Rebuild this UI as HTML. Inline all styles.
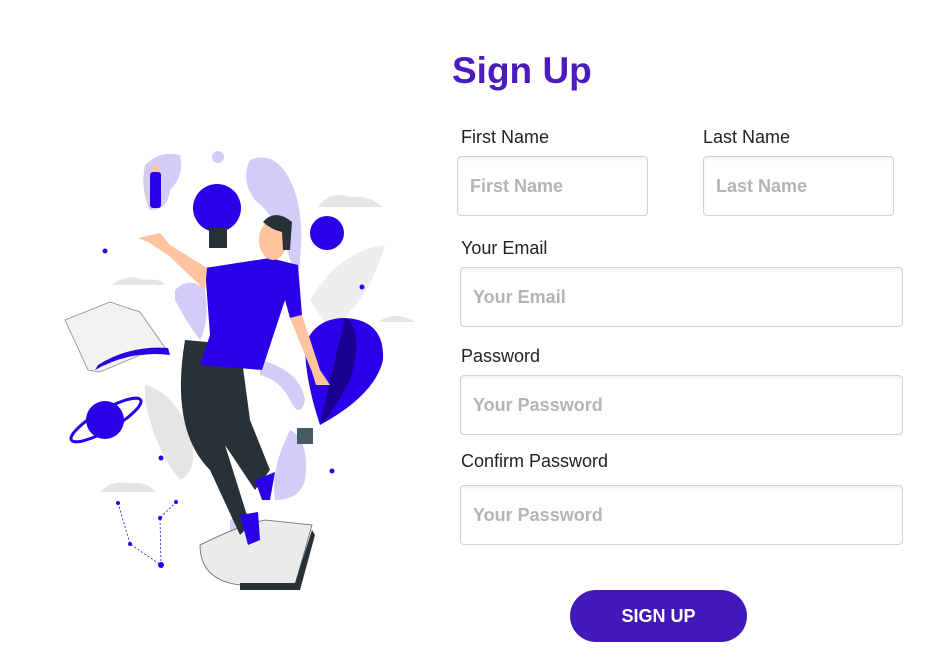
<!DOCTYPE html>
<html><head><meta charset="utf-8"><style>
*{margin:0;padding:0;box-sizing:border-box}
body{width:947px;height:667px;background:#fff;position:relative;overflow:hidden;font-family:"Liberation Sans",Arial,sans-serif}
.t{position:absolute;left:452px;top:50px;font-size:37px;font-weight:bold;color:#4a1bbf}
.l{position:absolute;font-size:18px;color:#222}
.i{position:absolute;border:1.5px solid #d2d2d2;border-radius:4px;background:#fff;box-shadow:inset 0 2px 3px rgba(0,0,0,.06);font-size:18px;font-weight:bold;color:#b4b4b4;padding-left:12px;display:flex;align-items:center}
.b{position:absolute;left:570px;top:590px;width:177px;height:52px;border-radius:26px;background:#4318b8;color:#fff;font-weight:bold;font-size:18px;display:flex;align-items:center;justify-content:center}
</style></head><body>
<svg width="440" height="620" style="position:absolute;left:0;top:0" viewBox="0 0 440 620">
<g fill="#d3ccf7">
<path d="M145 165 Q160 150 180 155 Q185 175 170 190 Q168 210 150 210 Q140 190 145 165Z"/>
<circle cx="218" cy="157" r="6"/>
<path d="M250 160 Q275 150 290 180 Q305 210 300 260 Q300 280 290 260 Q280 220 255 200 Q240 180 250 160Z"/>
<path d="M175 290 Q190 275 205 290 Q210 320 200 340 Q185 320 175 300Z"/>
<path d="M260 360 Q300 370 305 400 Q300 420 290 400 Q280 380 260 375Z"/>
<path d="M290 430 Q310 440 305 480 Q300 500 275 500 Q270 470 290 430Z"/>
<path d="M230 520 Q250 510 260 530 Q245 545 230 540Z"/>
</g>
<g fill="#e5e5e5">
<path d="M318 207 Q330 190 350 197 Q370 195 382 207Z"/>
<path d="M112 285 Q125 273 145 280 Q160 278 165 285Z"/>
<path d="M101 492 Q110 480 130 483 Q150 482 155 492Z"/>
<path d="M378 322 Q395 310 415 322Z"/>
<path d="M145 385 Q170 390 190 430 Q200 470 180 480 Q155 450 145 400Z"/>
<path d="M310 300 Q340 250 385 245 Q370 300 330 330Z" fill="#eeeeee"/>
</g>
<rect x="150" y="172" width="11" height="36" rx="3" fill="#2a00e8"/>
<path d="M150 172 L155.5 163 L161 172Z" fill="#f9c4a0"/>
<circle cx="217" cy="208" r="24" fill="#2a00e8"/>
<rect x="209" y="228" width="18" height="20" fill="#263238"/>
<circle cx="327" cy="233" r="17" fill="#2a00e8"/>
<path d="M65 320 L110 302 L140 312 L168 352 L140 355 L100 372 L88 370 Z" fill="#f2f2f2" stroke="#888" stroke-width=".8"/>
<path d="M95 370 Q130 350 170 355 L168 348 Q130 345 98 365Z" fill="#2a00e8"/>
<circle cx="105" cy="420" r="19" fill="#2a00e8"/>
<ellipse cx="106" cy="420" rx="40" ry="10" transform="rotate(-30 106 420)" fill="none" stroke="#2a00e8" stroke-width="3"/>
<path d="M345 318 Q385 320 383 360 Q375 395 320 425 Q305 380 305 345 Q315 318 345 318Z" fill="#2a00e8"/>
<path d="M345 318 Q365 330 350 380 Q335 410 320 425 Q330 380 345 318Z" fill="#1a0090"/>
<rect x="297" y="428" width="16" height="16" fill="#455a64"/>
<path d="M200 545 Q240 525 265 520 L312 525 L295 585 L240 585 Q200 580 200 545Z" fill="#ebebeb" stroke="#666" stroke-width=".8"/>
<path d="M240 583 L295 583 L312 530 L315 535 L300 590 L240 590Z" fill="#263238"/>
<path d="M185 340 L240 345 L250 420 L270 470 L255 490 L225 445 L250 525 L240 535 L210 470 Q170 430 185 340Z" fill="#263238"/>
<path d="M255 480 L275 472 L270 500 L262 500Z" fill="#2a00e8"/>
<path d="M240 515 L258 512 L260 540 L248 545Z" fill="#2a00e8"/>
<path d="M205 268 L270 258 L298 265 L302 315 L290 318 L285 300 L262 370 L200 365 L210 335 Z" fill="#2a00e8"/>
<path d="M207 268 L170 245 L160 233 L138 238 L148 242 L168 255 L205 290Z" fill="#ffc3a0"/>
<path d="M290 318 L302 315 L320 370 L330 385 L316 385 L312 372Z" fill="#ffc3a0"/>
<ellipse cx="273" cy="240" rx="14" ry="20" fill="#ffc3a0"/>
<path d="M263 222 Q275 208 292 222 L290 250 L283 250 L282 232 Q272 230 263 222Z" fill="#263238"/>
<g fill="#2a00e8"><circle cx="105" cy="251" r="2.5"/><circle cx="362" cy="287" r="2.5"/><circle cx="161" cy="458" r="2.5"/><circle cx="332" cy="471" r="2.5"/><circle cx="118" cy="503" r="2"/><circle cx="176" cy="502" r="2"/><circle cx="130" cy="544" r="2"/><circle cx="161" cy="565" r="3"/><circle cx="160" cy="518" r="2"/></g>
<path d="M118 503 L130 544 L161 565 L160 518 L176 502" fill="none" stroke="#2a00e8" stroke-width=".8" stroke-dasharray="2 2"/>
</svg>
<div class="t">Sign Up</div>
<div class="l" style="left:461px;top:127px">First Name</div>
<div class="l" style="left:703px;top:127px">Last Name</div>
<div class="i" style="left:457px;top:156px;width:191px;height:60px">First Name</div>
<div class="i" style="left:703px;top:156px;width:191px;height:60px">Last Name</div>
<div class="l" style="left:461px;top:238px">Your Email</div>
<div class="i" style="left:460px;top:267px;width:443px;height:60px">Your Email</div>
<div class="l" style="left:461px;top:346px">Password</div>
<div class="i" style="left:460px;top:375px;width:443px;height:60px">Your Password</div>
<div class="l" style="left:461px;top:451px">Confirm Password</div>
<div class="i" style="left:460px;top:485px;width:443px;height:60px">Your Password</div>
<div class="b">SIGN UP</div>
</body></html>
